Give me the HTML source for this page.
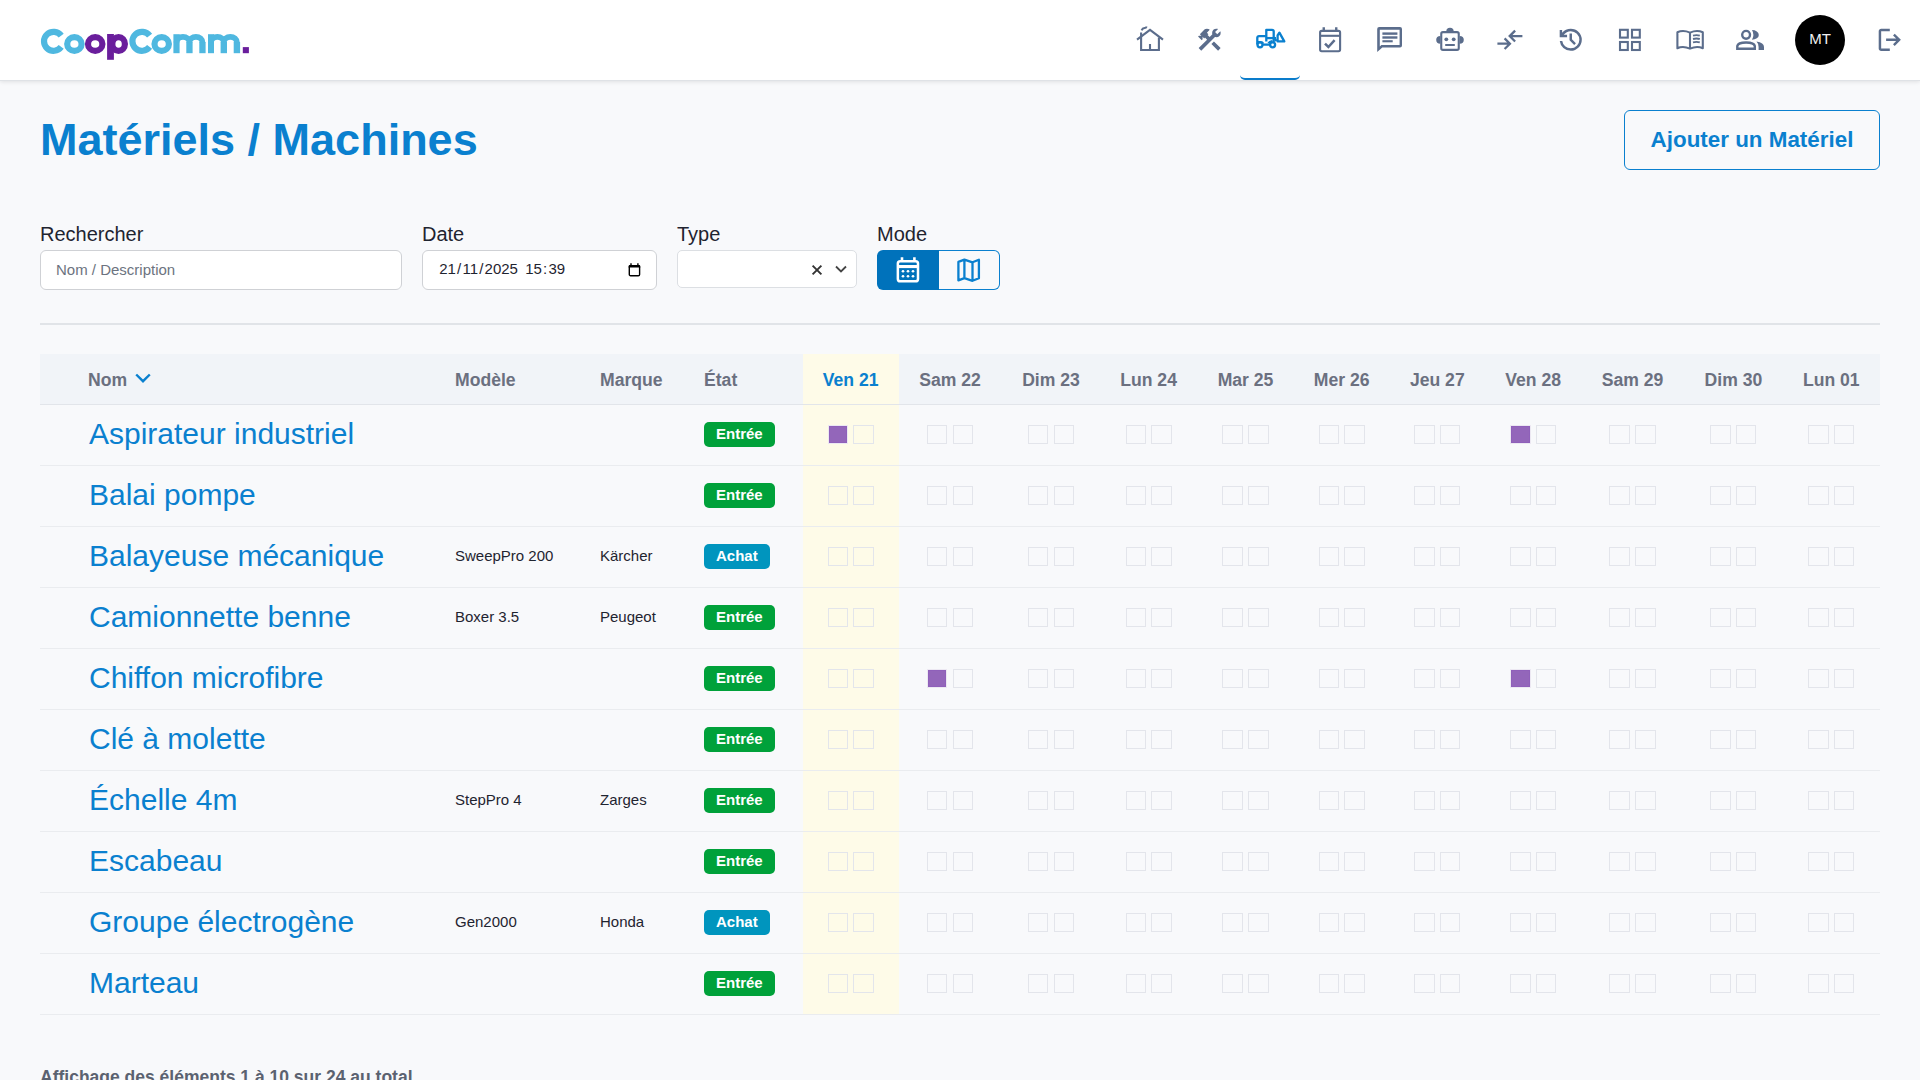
<!DOCTYPE html>
<html lang="fr">
<head>
<meta charset="utf-8">
<title>Matériels / Machines</title>
<style>
*{box-sizing:border-box;margin:0;padding:0}
html,body{width:1920px;height:1080px;overflow:hidden}
body{background:#f8f9fb;font-family:"Liberation Sans",sans-serif;color:#1f2430;position:relative}
.hdr{position:absolute;left:0;top:0;width:1920px;height:81px;background:#fff;box-shadow:0 1px 4px rgba(0,0,0,.10);border-bottom:1px solid #dfe2e6;z-index:2}
.act{position:absolute;left:1240px;top:0;width:60px;height:80px;border-bottom:2px solid #0a7ccb;border-radius:0 0 5px 5px}
.avatar{position:absolute;left:1795px;top:15px;width:50px;height:50px;border-radius:50%;background:#000;color:#f0f0f0;font-size:15px;line-height:47px;text-align:center}
h1{position:absolute;left:40px;top:110px;font-size:45px;font-weight:700;color:#0a80cf;line-height:60px;white-space:nowrap}
.addbtn{position:absolute;left:1624px;top:110px;width:256px;height:60px;border:1px solid #0a80cf;border-radius:6px;color:#0a80cf;font-weight:700;font-size:22.4px;text-align:center;line-height:58px;white-space:nowrap}
.lbl{position:absolute;top:222px;font-size:20px;color:#1f2430;line-height:24px}
.inp{position:absolute;top:250px;height:40px;background:#fff;border:1px solid #cfd1d5;border-radius:6px}
.ph{position:absolute;left:15px;top:0;line-height:38px;font-size:15px;color:#6c7380;white-space:nowrap}
.dt{position:absolute;left:15px;top:-1px;line-height:38px;font-size:15px;color:#1f2430;white-space:nowrap}.dt i{font-style:normal;padding:0 1.2px}.dt b{font-weight:400;padding-right:0.7px}
.sel{position:absolute;left:677px;top:250px;width:180px;height:38px;background:#fff;border:1px solid #dcdfe3;border-radius:5px}
.mode{position:absolute;left:877px;top:250px;width:123px;height:40px}
.mode .on{position:absolute;left:0;top:0;width:62px;height:40px;background:#0072bb;border-radius:6px 0 0 6px}
.mode .off{position:absolute;left:62px;top:0;width:61px;height:40px;border:1px solid #0a80cf;border-left:0;border-radius:0 6px 6px 0}
.hr{position:absolute;left:40px;top:323px;width:1840px;height:2px;background:#e1e4e8}
.thead{position:absolute;left:40px;top:354px;width:1840px;height:51px;background:#f1f4f8;border-bottom:1px solid #e2e5ea}
.th{position:absolute;top:1px;line-height:50px;font-size:17.6px;font-weight:700;color:#6b7080;white-space:nowrap}
.today{position:absolute;left:803px;top:354px;width:96px;height:660px;background:#fefbe8}
.row{position:absolute;left:40px;width:1840px;height:61px;border-bottom:1px solid #eaecef}
.nm{position:absolute;left:49px;top:-1px;line-height:60px;font-size:30px;color:#0a80cf;white-space:nowrap}
.sm{position:absolute;top:-1px;line-height:60px;font-size:15px;color:#1f2430;white-space:nowrap}
.badge{position:absolute;left:664px;top:17px;height:25px;line-height:24px;padding:0 12px;border-radius:5px;font-size:15px;font-weight:700;color:#fff;white-space:nowrap}
.g{background:#00a13a}.b{background:#0095be}
.bx{position:absolute;top:20px;width:20.6px;height:19px;border:1px solid #e3e5eb}
.bx.p{background:#9366ba;background-clip:padding-box;border-color:#ece8f2;box-shadow:inset 0 0 0 1px #8f60ba}
.foot{position:absolute;left:40px;top:1065px;font-size:17.5px;font-weight:700;color:#5b6270;white-space:nowrap;line-height:24px}
</style>
</head>
<body>
<div class="today"></div>
<div class="hdr">
<svg style="position:absolute;left:0;top:0" width="260" height="80" viewBox="0 0 260 80">
<g fill="none" stroke-width="6.2">
<path stroke="#4fb8e0" d="M61.2 35.7 A9.5 9.5 0 1 0 61.2 46.9"/>
<ellipse stroke="#4fb8e0" cx="74.4" cy="44" rx="7.2" ry="6.9"/>
<ellipse stroke="#6a1e9c" cx="95.2" cy="44" rx="7.2" ry="6.9"/>
<ellipse stroke="#6a1e9c" cx="118.6" cy="44" rx="6.3" ry="6.9"/>
<path stroke="#4fb8e0" d="M149.6 35.7 A9.5 9.5 0 1 0 149.6 46.9"/>
<ellipse stroke="#4fb8e0" cx="161.7" cy="44" rx="7.2" ry="6.9"/>
</g>
<rect fill="#6a1e9c" x="107.1" y="34" width="6.8" height="25.8"/>
<g fill="#4fb8e0">
<rect x="173.4" y="34.2" width="6.2" height="19"/>
<rect x="186.3" y="42" width="6.3" height="11.2"/>
<rect x="199.3" y="42" width="6.3" height="11.2"/>
<rect x="208" y="34.2" width="6" height="19"/>
<rect x="220.6" y="42" width="6.4" height="11.2"/>
<rect x="233.7" y="42" width="6.4" height="11.2"/>
</g>
<g fill="none" stroke="#4fb8e0" stroke-width="5.8">
<path d="M176.5 42.5 A6.45 5.7 0 0 1 189.45 42.5 A6.5 5.7 0 0 1 202.45 42.5"/>
<path d="M211 42.5 A6.4 5.7 0 0 1 223.8 42.5 A6.55 5.7 0 0 1 236.9 42.5"/>
</g>
<rect fill="#6a1e9c" x="242.8" y="47.1" width="6.1" height="6.1"/>
</svg>
<div class="act"></div>
<svg style="position:absolute;left:1130px;top:20px" width="40" height="40" viewBox="0 0 40 40" ><g fill="none" stroke="#5b6d8c" stroke-width="2.1"><path d="M7 19.6 L20 9.8 L33 19.6"/><path d="M11.1 12.6 V30 H28.9 V17.5"/><path d="M20 30 V24"/><path d="M11.6 10.4 q0.8-2.2 3-2.3 q1.6 0 2-1.6" stroke-width="2"/></g></svg>
<svg style="position:absolute;left:1194.8px;top:25.2px" width="29.3" height="29.3" viewBox="0 -960 960 960" ><path fill="#5b6d8c" d="M756-120 537-339l84-84 219 219-84 84Zm-552 0-84-84 276-276-68-68-28 28-51-51v82l-28 28-121-121 28-28h82l-50-50 142-142q20-20 43-29t47-9q24 0 47 9t43 29l-92 92 50 50-28 28 68 68 90-90q-4-11-6.5-23t-2.5-24q0-59 40.5-99.5T701-841q15 0 28.5 3t27.5 9l-99 99 72 72 99-99q7 14 9.5 27.5T841-701q0 59-40.5 99.5T701-561q-12 0-24-2t-23-7L204-120Z"/></svg>
<svg style="position:absolute;left:1250px;top:20px" width="40" height="40" viewBox="0 0 40 40" ><g fill="none" stroke="#0a80cf" stroke-width="2.3" stroke-linejoin="round"><path d="M16.3 21.5 V9.8 H22 a1.7 1.7 0 0 1 1.7 1.7 V22"/><path d="M16.3 18.1 H26"/><path d="M16.3 16.1 H9 a1.7 1.7 0 0 0 -1.7 1.7 V24.5"/><path d="M7.3 22.2 H10.5 Q12.5 22.2 13 23.5"/><circle cx="10" cy="24.8" r="2.5"/><circle cx="22.6" cy="24.8" r="2.5"/><path d="M12.5 24.6 H20.1"/><path d="M18.5 23.3 Q19.5 21.3 22.5 21.1"/><path d="M27.6 15.4 L29.4 12.6 L34.3 21.4 H27.6 Z"/><path d="M24 18.1 L26.6 21"/></g></svg>
<svg style="position:absolute;left:1310px;top:20px" width="40" height="40" viewBox="0 0 40 40" ><g fill="none" stroke="#5b6d8c" stroke-width="2.1"><rect x="10" y="30.8" width="0" height="0"/><rect x="10.1" y="10.9" width="20" height="20.3" rx="1.6"/><path d="M10.1 15.8 H30.1"/><path d="M13.75 7.2 V10.5 M26.25 7.2 V10.5" stroke-width="2.4"/><path d="M15 23.6 L18.4 27 L24.6 20.2" stroke-width="2.5"/></g></svg>
<svg style="position:absolute;left:1370px;top:20px" width="40" height="40" viewBox="0 0 40 40" ><g fill="#5b6d8c"><path fill-rule="evenodd" d="M9.2 7 H30 a2 2 0 0 1 2 2 V25.4 a2 2 0 0 1 -2 2 H12.3 L7.2 32 V9 a2 2 0 0 1 2 -2 Z M9.8 9.8 V26.6 L11.4 25 H29.6 V9.8 Z"/><rect x="12.4" y="12.4" width="15" height="2.4"/><rect x="12.4" y="16.3" width="15" height="2.4"/><rect x="12.4" y="20.2" width="10.3" height="2.1"/></g></svg>
<svg style="position:absolute;left:1430px;top:20px" width="40" height="40" viewBox="0 0 40 40" ><rect x="11.25" y="12.15" width="17.5" height="17.7" rx="1.7" fill="none" stroke="#5b6d8c" stroke-width="2.1"/><g fill="#5b6d8c"><path d="M16.3 11.3 A3.7 3.6 0 0 1 23.7 11.3 Z"/><path d="M10.4 15.9 A4.2 3.9 0 0 0 10.4 23.7 Z M29.6 15.9 A4.2 3.9 0 0 1 29.6 23.7 Z"/><circle cx="16.3" cy="19.3" r="1.9"/><circle cx="23.7" cy="19.3" r="1.9"/><rect x="15.2" y="24" width="9.6" height="2"/></g></svg>
<svg style="position:absolute;left:1490px;top:20px" width="40" height="40" viewBox="0 0 40 40" ><g fill="none" stroke="#5b6d8c" stroke-width="2.3"><path d="M7.4 23.7 H19.5 M14.6 18.4 L19.9 23.7 L14.6 29"/><path d="M32.4 16.1 H20.5 M25.1 10.6 L19.7 16.1 L25.1 21.5"/></g></svg>
<svg style="position:absolute;left:1555.6px;top:25px" width="29.5" height="29.5" viewBox="0 -960 960 960" ><path fill="#5b6d8c" d="M480-120q-138 0-240.5-91.5T122-440h82q14 104 92.5 172T480-200q117 0 198.5-81.5T760-480q0-117-81.5-198.5T480-760q-69 0-129 32t-101 88h110v80H120v-240h80v94q51-64 124.5-99T480-840q75 0 140.5 28.5t114 77q48.5 48.5 77 114T840-480q0 75-28.5 140.5t-77 114q-48.5 48.5-114 77T480-120Zm112-192L440-464v-216h80v184l128 128-56 56Z"/></svg>
<svg style="position:absolute;left:1610px;top:20px" width="40" height="40" viewBox="0 0 40 40" ><g fill="none" stroke="#5b6d8c" stroke-width="2.1"><rect x="10" y="9.8" width="7.8" height="7.8"/><rect x="22" y="9.8" width="7.8" height="7.8"/><rect x="10" y="22" width="7.8" height="8"/><rect x="22" y="22" width="7.8" height="8"/></g></svg>
<svg style="position:absolute;left:1670px;top:20px" width="40" height="40" viewBox="0 0 40 40" ><g fill="none" stroke="#5b6d8c" stroke-width="2.1" stroke-linejoin="round"><path d="M7.4 12.3 Q13 9.6 20 12.6 Q27 9.6 32.8 12.3 V28.2 Q27 25.6 20 28.6 Q13 25.6 7.4 28.2 Z"/><path d="M20 12.6 V28.6"/><path d="M23 15.6 Q26.5 14.6 29.8 15.6 M23 19 Q26.5 18 29.8 19 M23 22.4 Q26.5 21.4 29.8 22.4" stroke-width="1.9"/></g></svg>
<svg style="position:absolute;left:1730px;top:20px" width="40" height="40" viewBox="0 0 40 40" ><g fill="none" stroke="#5b6d8c" stroke-width="2.4"><circle cx="16.1" cy="14.8" r="3.9"/><path d="M7.3 28.7 V26 Q8 22.5 16.1 22.5 Q24.2 22.5 24.8 26 V28.7 Z"/></g><g fill="#5b6d8c"><path d="M22 10 A6.8 4.9 0 0 1 22 19.8 A9.9 9.9 0 0 0 22 10 Z"/><path d="M26.5 21.4 Q34 22.5 34 27 V29.9 H28.6 V27 Q28.6 23.5 26.5 21.4 Z"/></g></svg>
<svg style="position:absolute;left:1875.1px;top:25.3px" width="29.6" height="29.6" viewBox="0 -960 960 960" ><path fill="#5b6d8c" d="M200-120q-33 0-56.5-23.5T120-200v-560q0-33 23.5-56.5T200-840h280v80H200v560h280v80H200Zm440-160-55-58 102-102H360v-80h327L585-622l55-58 200 200-200 200Z"/></svg>
<div class="avatar">MT</div>
</div>
<h1>Matériels / Machines</h1>
<div class="addbtn">Ajouter un Matériel</div>

<div class="lbl" style="left:40px">Rechercher</div>
<div class="lbl" style="left:422px">Date</div>
<div class="lbl" style="left:677px">Type</div>
<div class="lbl" style="left:877px">Mode</div>
<div class="inp" style="left:40px;width:362px"><div class="ph">Nom / Description</div></div>
<div class="inp" style="left:422px;width:235px"><div class="dt"><i>21</i>/<i>11</i>/<i>2025</i><b> </b><i>15</i>:<i>39</i></div>
<svg style="position:absolute;left:205px;top:12px" width="13" height="14" viewBox="0 0 13 14"><rect x="1.3" y="2.6" width="10.3" height="10.1" rx="1.3" fill="none" stroke="#000" stroke-width="1.4"/><path d="M0.6 4.4 V3.3 a1.4 1.4 0 0 1 1.4 -1.4 H10.9 a1.4 1.4 0 0 1 1.4 1.4 V4.4 Z" fill="#000"/><path d="M3 0.3 V2.2 M9.9 0.3 V2.2" stroke="#000" stroke-width="1.4"/></svg>
</div>
<div class="sel">
<svg style="position:absolute;left:133px;top:13px" width="12" height="12" viewBox="0 0 12 12"><path d="M1.6 1.6 L10.4 10.4 M10.4 1.6 L1.6 10.4" stroke="#333" stroke-width="1.9"/></svg>
<svg style="position:absolute;left:157px;top:13.5px" width="12" height="9" viewBox="0 0 12 9"><path d="M1 1.5 L6 6.5 L11 1.5" fill="none" stroke="#444" stroke-width="1.8"/></svg>
</div>
<div class="mode"><div class="off"></div><div class="on">
<svg style="position:absolute;left:19px;top:7px" width="26" height="28" viewBox="0 0 26 28"><rect x="1.85" y="4.15" width="20.15" height="20.2" rx="2.4" fill="none" stroke="#fff" stroke-width="2.5"/><rect x="1.85" y="8" width="20.15" height="3.1" fill="#fff"/><path d="M6 0.3 V4 M18.4 0.3 V4" stroke="#fff" stroke-width="2.6"/><g fill="#fff"><circle cx="7" cy="14.25" r="1.35"/><circle cx="12" cy="14.25" r="1.35"/><circle cx="17" cy="14.25" r="1.35"/><circle cx="7" cy="19.25" r="1.35"/><circle cx="12" cy="19.25" r="1.35"/><circle cx="17" cy="19.25" r="1.35"/></g></svg>
</div>
<svg style="position:absolute;left:79px;top:8px" width="26" height="26" viewBox="0 0 26 26"><path d="M2.4 3.9 L8.4 1.6 L16.5 4.3 L22.9 1.8 V20.3 L16.5 22.8 L8.4 20.2 L2.4 22.4 Z M8.4 1.6 V20.2 M16.5 4.3 V22.8" fill="none" stroke="#0a80cf" stroke-width="2.3" stroke-linejoin="round"/></svg>
</div>
<div class="hr"></div>

<div class="thead"><div style="position:absolute;left:763px;top:0;width:96px;height:50px;background:#fefbe8"></div><div class="th" style="left:48px">Nom</div><svg style="position:absolute;left:94px;top:18px" width="18" height="14" viewBox="0 0 18 14"><path d="M2.2 2.5 L9 9.2 L15.8 2.5" fill="none" stroke="#0a80cf" stroke-width="2.4"/></svg><div class="th" style="left:415px">Modèle</div><div class="th" style="left:560px">Marque</div><div class="th" style="left:664px">État</div><div class="th dc" style="color:#0a80cf;left:750.7px;width:120px;text-align:center">Ven 21</div><div class="th dc" style="left:850.0px;width:120px;text-align:center">Sam 22</div><div class="th dc" style="left:951.0px;width:120px;text-align:center">Dim 23</div><div class="th dc" style="left:1048.6px;width:120px;text-align:center">Lun 24</div><div class="th dc" style="left:1145.5px;width:120px;text-align:center">Mar 25</div><div class="th dc" style="left:1241.7px;width:120px;text-align:center">Mer 26</div><div class="th dc" style="left:1337.3px;width:120px;text-align:center">Jeu 27</div><div class="th dc" style="left:1433.1px;width:120px;text-align:center">Ven 28</div><div class="th dc" style="left:1532.5px;width:120px;text-align:center">Sam 29</div><div class="th dc" style="left:1633.4px;width:120px;text-align:center">Dim 30</div><div class="th dc" style="left:1731.3px;width:120px;text-align:center">Lun 01</div></div>
<div class="row" style="top:405px"><div class="nm">Aspirateur industriel</div><div class="badge g">Entrée</div><div class="bx p" style="left:787.6px"></div><div class="bx" style="left:813.2px"></div><div class="bx" style="left:886.9px"></div><div class="bx" style="left:912.5px"></div><div class="bx" style="left:987.9px"></div><div class="bx" style="left:1013.5px"></div><div class="bx" style="left:1085.5px"></div><div class="bx" style="left:1111.1px"></div><div class="bx" style="left:1182.4px"></div><div class="bx" style="left:1208.0px"></div><div class="bx" style="left:1278.6px"></div><div class="bx" style="left:1304.2px"></div><div class="bx" style="left:1374.2px"></div><div class="bx" style="left:1399.8px"></div><div class="bx p" style="left:1470.0px"></div><div class="bx" style="left:1495.6px"></div><div class="bx" style="left:1569.4px"></div><div class="bx" style="left:1595.0px"></div><div class="bx" style="left:1670.3px"></div><div class="bx" style="left:1695.9px"></div><div class="bx" style="left:1768.2px"></div><div class="bx" style="left:1793.8px"></div></div>
<div class="row" style="top:466px"><div class="nm">Balai pompe</div><div class="badge g">Entrée</div><div class="bx" style="left:787.6px"></div><div class="bx" style="left:813.2px"></div><div class="bx" style="left:886.9px"></div><div class="bx" style="left:912.5px"></div><div class="bx" style="left:987.9px"></div><div class="bx" style="left:1013.5px"></div><div class="bx" style="left:1085.5px"></div><div class="bx" style="left:1111.1px"></div><div class="bx" style="left:1182.4px"></div><div class="bx" style="left:1208.0px"></div><div class="bx" style="left:1278.6px"></div><div class="bx" style="left:1304.2px"></div><div class="bx" style="left:1374.2px"></div><div class="bx" style="left:1399.8px"></div><div class="bx" style="left:1470.0px"></div><div class="bx" style="left:1495.6px"></div><div class="bx" style="left:1569.4px"></div><div class="bx" style="left:1595.0px"></div><div class="bx" style="left:1670.3px"></div><div class="bx" style="left:1695.9px"></div><div class="bx" style="left:1768.2px"></div><div class="bx" style="left:1793.8px"></div></div>
<div class="row" style="top:527px"><div class="nm">Balayeuse mécanique</div><div class="sm" style="left:415px">SweepPro 200</div><div class="sm" style="left:560px">Kärcher</div><div class="badge b">Achat</div><div class="bx" style="left:787.6px"></div><div class="bx" style="left:813.2px"></div><div class="bx" style="left:886.9px"></div><div class="bx" style="left:912.5px"></div><div class="bx" style="left:987.9px"></div><div class="bx" style="left:1013.5px"></div><div class="bx" style="left:1085.5px"></div><div class="bx" style="left:1111.1px"></div><div class="bx" style="left:1182.4px"></div><div class="bx" style="left:1208.0px"></div><div class="bx" style="left:1278.6px"></div><div class="bx" style="left:1304.2px"></div><div class="bx" style="left:1374.2px"></div><div class="bx" style="left:1399.8px"></div><div class="bx" style="left:1470.0px"></div><div class="bx" style="left:1495.6px"></div><div class="bx" style="left:1569.4px"></div><div class="bx" style="left:1595.0px"></div><div class="bx" style="left:1670.3px"></div><div class="bx" style="left:1695.9px"></div><div class="bx" style="left:1768.2px"></div><div class="bx" style="left:1793.8px"></div></div>
<div class="row" style="top:588px"><div class="nm">Camionnette benne</div><div class="sm" style="left:415px">Boxer 3.5</div><div class="sm" style="left:560px">Peugeot</div><div class="badge g">Entrée</div><div class="bx" style="left:787.6px"></div><div class="bx" style="left:813.2px"></div><div class="bx" style="left:886.9px"></div><div class="bx" style="left:912.5px"></div><div class="bx" style="left:987.9px"></div><div class="bx" style="left:1013.5px"></div><div class="bx" style="left:1085.5px"></div><div class="bx" style="left:1111.1px"></div><div class="bx" style="left:1182.4px"></div><div class="bx" style="left:1208.0px"></div><div class="bx" style="left:1278.6px"></div><div class="bx" style="left:1304.2px"></div><div class="bx" style="left:1374.2px"></div><div class="bx" style="left:1399.8px"></div><div class="bx" style="left:1470.0px"></div><div class="bx" style="left:1495.6px"></div><div class="bx" style="left:1569.4px"></div><div class="bx" style="left:1595.0px"></div><div class="bx" style="left:1670.3px"></div><div class="bx" style="left:1695.9px"></div><div class="bx" style="left:1768.2px"></div><div class="bx" style="left:1793.8px"></div></div>
<div class="row" style="top:649px"><div class="nm">Chiffon microfibre</div><div class="badge g">Entrée</div><div class="bx" style="left:787.6px"></div><div class="bx" style="left:813.2px"></div><div class="bx p" style="left:886.9px"></div><div class="bx" style="left:912.5px"></div><div class="bx" style="left:987.9px"></div><div class="bx" style="left:1013.5px"></div><div class="bx" style="left:1085.5px"></div><div class="bx" style="left:1111.1px"></div><div class="bx" style="left:1182.4px"></div><div class="bx" style="left:1208.0px"></div><div class="bx" style="left:1278.6px"></div><div class="bx" style="left:1304.2px"></div><div class="bx" style="left:1374.2px"></div><div class="bx" style="left:1399.8px"></div><div class="bx p" style="left:1470.0px"></div><div class="bx" style="left:1495.6px"></div><div class="bx" style="left:1569.4px"></div><div class="bx" style="left:1595.0px"></div><div class="bx" style="left:1670.3px"></div><div class="bx" style="left:1695.9px"></div><div class="bx" style="left:1768.2px"></div><div class="bx" style="left:1793.8px"></div></div>
<div class="row" style="top:710px"><div class="nm">Clé à molette</div><div class="badge g">Entrée</div><div class="bx" style="left:787.6px"></div><div class="bx" style="left:813.2px"></div><div class="bx" style="left:886.9px"></div><div class="bx" style="left:912.5px"></div><div class="bx" style="left:987.9px"></div><div class="bx" style="left:1013.5px"></div><div class="bx" style="left:1085.5px"></div><div class="bx" style="left:1111.1px"></div><div class="bx" style="left:1182.4px"></div><div class="bx" style="left:1208.0px"></div><div class="bx" style="left:1278.6px"></div><div class="bx" style="left:1304.2px"></div><div class="bx" style="left:1374.2px"></div><div class="bx" style="left:1399.8px"></div><div class="bx" style="left:1470.0px"></div><div class="bx" style="left:1495.6px"></div><div class="bx" style="left:1569.4px"></div><div class="bx" style="left:1595.0px"></div><div class="bx" style="left:1670.3px"></div><div class="bx" style="left:1695.9px"></div><div class="bx" style="left:1768.2px"></div><div class="bx" style="left:1793.8px"></div></div>
<div class="row" style="top:771px"><div class="nm">Échelle 4m</div><div class="sm" style="left:415px">StepPro 4</div><div class="sm" style="left:560px">Zarges</div><div class="badge g">Entrée</div><div class="bx" style="left:787.6px"></div><div class="bx" style="left:813.2px"></div><div class="bx" style="left:886.9px"></div><div class="bx" style="left:912.5px"></div><div class="bx" style="left:987.9px"></div><div class="bx" style="left:1013.5px"></div><div class="bx" style="left:1085.5px"></div><div class="bx" style="left:1111.1px"></div><div class="bx" style="left:1182.4px"></div><div class="bx" style="left:1208.0px"></div><div class="bx" style="left:1278.6px"></div><div class="bx" style="left:1304.2px"></div><div class="bx" style="left:1374.2px"></div><div class="bx" style="left:1399.8px"></div><div class="bx" style="left:1470.0px"></div><div class="bx" style="left:1495.6px"></div><div class="bx" style="left:1569.4px"></div><div class="bx" style="left:1595.0px"></div><div class="bx" style="left:1670.3px"></div><div class="bx" style="left:1695.9px"></div><div class="bx" style="left:1768.2px"></div><div class="bx" style="left:1793.8px"></div></div>
<div class="row" style="top:832px"><div class="nm">Escabeau</div><div class="badge g">Entrée</div><div class="bx" style="left:787.6px"></div><div class="bx" style="left:813.2px"></div><div class="bx" style="left:886.9px"></div><div class="bx" style="left:912.5px"></div><div class="bx" style="left:987.9px"></div><div class="bx" style="left:1013.5px"></div><div class="bx" style="left:1085.5px"></div><div class="bx" style="left:1111.1px"></div><div class="bx" style="left:1182.4px"></div><div class="bx" style="left:1208.0px"></div><div class="bx" style="left:1278.6px"></div><div class="bx" style="left:1304.2px"></div><div class="bx" style="left:1374.2px"></div><div class="bx" style="left:1399.8px"></div><div class="bx" style="left:1470.0px"></div><div class="bx" style="left:1495.6px"></div><div class="bx" style="left:1569.4px"></div><div class="bx" style="left:1595.0px"></div><div class="bx" style="left:1670.3px"></div><div class="bx" style="left:1695.9px"></div><div class="bx" style="left:1768.2px"></div><div class="bx" style="left:1793.8px"></div></div>
<div class="row" style="top:893px"><div class="nm">Groupe électrogène</div><div class="sm" style="left:415px">Gen2000</div><div class="sm" style="left:560px">Honda</div><div class="badge b">Achat</div><div class="bx" style="left:787.6px"></div><div class="bx" style="left:813.2px"></div><div class="bx" style="left:886.9px"></div><div class="bx" style="left:912.5px"></div><div class="bx" style="left:987.9px"></div><div class="bx" style="left:1013.5px"></div><div class="bx" style="left:1085.5px"></div><div class="bx" style="left:1111.1px"></div><div class="bx" style="left:1182.4px"></div><div class="bx" style="left:1208.0px"></div><div class="bx" style="left:1278.6px"></div><div class="bx" style="left:1304.2px"></div><div class="bx" style="left:1374.2px"></div><div class="bx" style="left:1399.8px"></div><div class="bx" style="left:1470.0px"></div><div class="bx" style="left:1495.6px"></div><div class="bx" style="left:1569.4px"></div><div class="bx" style="left:1595.0px"></div><div class="bx" style="left:1670.3px"></div><div class="bx" style="left:1695.9px"></div><div class="bx" style="left:1768.2px"></div><div class="bx" style="left:1793.8px"></div></div>
<div class="row" style="top:954px"><div class="nm">Marteau</div><div class="badge g">Entrée</div><div class="bx" style="left:787.6px"></div><div class="bx" style="left:813.2px"></div><div class="bx" style="left:886.9px"></div><div class="bx" style="left:912.5px"></div><div class="bx" style="left:987.9px"></div><div class="bx" style="left:1013.5px"></div><div class="bx" style="left:1085.5px"></div><div class="bx" style="left:1111.1px"></div><div class="bx" style="left:1182.4px"></div><div class="bx" style="left:1208.0px"></div><div class="bx" style="left:1278.6px"></div><div class="bx" style="left:1304.2px"></div><div class="bx" style="left:1374.2px"></div><div class="bx" style="left:1399.8px"></div><div class="bx" style="left:1470.0px"></div><div class="bx" style="left:1495.6px"></div><div class="bx" style="left:1569.4px"></div><div class="bx" style="left:1595.0px"></div><div class="bx" style="left:1670.3px"></div><div class="bx" style="left:1695.9px"></div><div class="bx" style="left:1768.2px"></div><div class="bx" style="left:1793.8px"></div></div>
<div class="foot">Affichage des éléments 1 à 10 sur 24 au total</div>
</body>
</html>
